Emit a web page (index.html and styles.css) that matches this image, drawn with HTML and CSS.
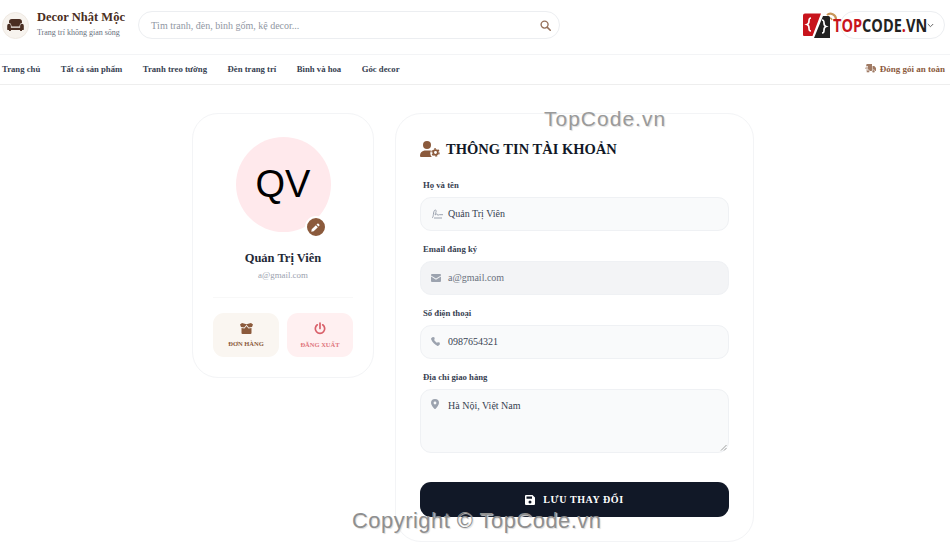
FILE: index.html
```html
<!DOCTYPE html>
<html lang="vi">
<head>
    <meta charset="UTF-8">
    <meta name="viewport" content="width=device-width, initial-scale=1.0">
    <title>Decor Nhật Mộc - Tài khoản</title>
    <link rel="stylesheet" href="styles.css">
</head>
<body>

    <header class="site-header">
        <div class="header-top">
            <div class="brand">
                <div class="brand-icon">
                    <svg width="17" height="12" viewBox="0 0 18 13"><path fill="#4a2e22" d="M5 0h8a3 3 0 0 1 3 3v1.200a3 3 0 0 0-2.600 3V8H4.600v-.8A3 3 0 0 0 2 4.200V3a3 3 0 0 1 3-3zM2 5.200a2 2 0 0 1 2 2V9.500h10V7.200a2 2 0 1 1 4 0V11a1 1 0 0 1-1 1h-1v1h-2v-1H4v1H2v-1H1a1 1 0 0 1-1-1V7.200a2 2 0 0 1 2-2z"/></svg>
                </div>
                <div class="brand-text">
                    <div class="brand-name">Decor Nhật Mộc</div>
                    <div class="brand-sub">Trang trí không gian sống</div>
                </div>
            </div>
            <div class="search-box">
                <span class="search-text">Tìm tranh, đèn, bình gốm, kệ decor...</span>
                <svg width="11" height="11" viewBox="0 0 12 12"><circle cx="5" cy="5" r="3.800" fill="none" stroke="#95705a" stroke-width="1.500"/><path d="M8 8l3.200 3.200" stroke="#95705a" stroke-width="1.700" stroke-linecap="round"/></svg>
            </div>
            <div class="account-pill">
                <svg class="chevron" width="7" height="5" viewBox="0 0 7 5"><path d="M.8 1l2.700 2.700L6.200 1" fill="none" stroke="#666" stroke-width="1"/></svg>
            </div>
        </div>
        <nav class="main-nav">
            <div class="nav-links">
                <a>Trang chủ</a>
                <a>Tất cả sản phẩm</a>
                <a>Tranh treo tường</a>
                <a>Đèn trang trí</a>
                <a>Bình và hoa</a>
                <a>Góc decor</a>
            </div>
            <div class="nav-note">
                <svg width="11" height="9" viewBox="0 0 11 9"><path fill="#a07a63" d="M1.500 0h5.500v7H1.500V5.500H3V5H0v-.6h3v-.8H.5V3H3v-.8H1V1.600h.5zM7.500 2h1.800L11 4v3H7.500z"/><circle cx="3" cy="7.300" r="1.500" fill="#a07a63" stroke="#fff" stroke-width=".6"/><circle cx="8.500" cy="7.300" r="1.500" fill="#a07a63" stroke="#fff" stroke-width=".6"/></svg>
                Đóng gói an toàn
            </div>
        </nav>
    </header>

    <main class="account-page">
        <aside class="profile-card">
            <div class="avatar">
                QV
                <span class="avatar-edit">
                    <svg width="9" height="9" viewBox="0 0 10 10"><path fill="#fff" d="M7 .8a1 1 0 0 1 1.400 0l.8.8a1 1 0 0 1 0 1.400L8.300 3.900 6.100 1.700zM5.400 2.400l2.200 2.200L3 9.200l-2.700.5.500-2.700z"/></svg>
                </span>
            </div>
            <div class="profile-name">Quản Trị Viên</div>
            <div class="profile-email">a@gmail.com</div>
            <div class="profile-actions">
                <a class="action-btn action-orders">
                    <svg width="13" height="11" viewBox="0 0 13 11"><path fill="#8b5a3c" d="M1.500 5l3 .6L6.500 3l2 2.600 3-.6V10a1 1 0 0 1-1 1h-8a1 1 0 0 1-1-1zM0 1.600L2 0l4.500 1.200L11 0l2 1.600-1 2.400-3.200.6-2.300-2.800-2.300 2.800L1 4z"/></svg>
                    <span>ĐƠN HÀNG</span>
                </a>
                <a class="action-btn action-logout">
                    <svg width="12" height="13" viewBox="0 0 12 13"><path d="M6 1v5.500" stroke="#d9606a" stroke-width="1.700" stroke-linecap="round"/><path d="M3.300 2.800a4.700 4.700 0 1 0 5.400 0" fill="none" stroke="#d9606a" stroke-width="1.700" stroke-linecap="round"/></svg>
                    <span>ĐĂNG XUẤT</span>
                </a>
            </div>
        </aside>

        <section class="info-card">
            <h2 class="info-title">
                <svg width="20" height="16" viewBox="0 0 20 16"><circle cx="7" cy="4" r="4" fill="#8b5a3c"/><path fill="#8b5a3c" d="M4.500 9.500h5c.6 0 1.100.1 1.600.3a5 5 0 0 0 .6 5.900c-.2.200-.4.300-.7.300H1a1 1 0 0 1-1-1 5.500 5.500 0 0 1 4.500-5.500z"/><circle cx="15.500" cy="11.500" r="2.300" fill="none" stroke="#8b5a3c" stroke-width="1.700"/><circle cx="15.500" cy="11.500" r="3.600" fill="none" stroke="#8b5a3c" stroke-width="1.300" stroke-dasharray="1.900 1.870"/></svg>
                THÔNG TIN TÀI KHOẢN
            </h2>

            <div class="field">
                <label>Họ và tên</label>
                <div class="input-box">
                    <svg class="field-icon" width="12" height="10" viewBox="0 0 12 10"><path d="M1 9c1-.5 1.200-2 1.400-3.500C2.600 3.500 3 1 4.300 1c1 0 1 1.300.6 2.300C4.500 4.500 4 5 4.200 6c.6-.5 1.300-1.500 2-1 .4.300 0 1 .5 1.200.5.100 1-.5 1.600-.5H12M3 9h8" fill="none" stroke="#9ca3af" stroke-width="1"/></svg>
                    <span>Quản Trị Viên</span>
                </div>
            </div>
            <div class="field">
                <label>Email đăng ký</label>
                <div class="input-box is-locked">
                    <svg class="field-icon" width="10" height="8" viewBox="0 0 10 8"><path fill="#9ca3af" d="M1 0h8a1 1 0 0 1 1 1v.4L5 4.600 0 1.400V1a1 1 0 0 1 1-1zM0 2.600l5 3.200 5-3.200V7a1 1 0 0 1-1 1H1a1 1 0 0 1-1-1z"/></svg>
                    <span>a@gmail.com</span>
                </div>
            </div>
            <div class="field">
                <label>Số điện thoại</label>
                <div class="input-box">
                    <svg class="field-icon" width="10" height="10" viewBox="0 0 10 10"><path fill="#9ca3af" d="M2.300.1l1 .3c.3.1.5.4.4.7L3.300 3c0 .2 0 .4.2.5l1.900 2c.2.200.4.200.6.100l1.800-.4c.3-.1.600.1.700.4l.4 1.200c.1.300 0 .6-.2.800l-1 1c-.3.300-.7.400-1.100.300C3.800 7.800 1.400 5.200.1 2.200 0 1.800.100 1.400.4 1.100L1.500.3c.2-.2.500-.3.800-.2z"/></svg>
                    <span>0987654321</span>
                </div>
            </div>
            <div class="field">
                <label>Địa chỉ giao hàng</label>
                <div class="input-box is-textarea">
                    <svg class="field-icon" width="8" height="10" viewBox="0 0 8 10"><path fill="#9ca3af" fill-rule="evenodd" d="M4 0a4 4 0 0 1 4 4c0 1.800-2.400 4.700-3.400 5.800a.8.800 0 0 1-1.200 0C2.400 8.700 0 5.800 0 4a4 4 0 0 1 4-4zm0 2.600a1.400 1.400 0 1 0 0 2.800 1.400 1.400 0 0 0 0-2.800z"/></svg>
                    <span>Hà Nội, Việt Nam</span>
                    <svg class="resize-grip" width="7" height="7" viewBox="0 0 7 7"><path d="M1 6.500L6.500 1M4 6.500L6.500 4" stroke="#888" stroke-width=".8"/></svg>
                </div>
            </div>

            <button class="save-btn">
                <svg width="10" height="10" viewBox="0 0 10 10"><path fill="#fff" fill-rule="evenodd" d="M1 0h6.500L10 2.500V9a1 1 0 0 1-1 1H1a1 1 0 0 1-1-1V1a1 1 0 0 1 1-1zm.5 1.500v2.200h5.500V1.500zM5 5.500a1.500 1.500 0 1 0 0 3 1.500 1.500 0 0 0 0-3z"/></svg>
                LƯU THAY ĐỔI
            </button>
        </section>
    </main>

    <!-- logo va watermark nam de len trang -->
    <div class="tc-logo">
        <svg class="tc-mark" width="36" height="30" viewBox="0 0 36 30">
            <path fill="none" stroke="#c9975a" stroke-width="2.200" d="M24 4a5.500 5.500 0 0 1 9 4"/>
            <path fill="none" stroke="#c9975a" stroke-width="1.500" d="M26 7a2.500 2.500 0 0 1 3 2"/>
            <path fill="#c8141c" d="M2 2.500h16L9.500 25H1a1 1 0 0 1-1-1V4.500a2 2 0 0 1 2-2z"/>
            <path fill="#222" d="M20 5h5.500a1.500 1.500 0 0 1 1.500 1.500V27H11z"/>
            <path fill="none" stroke="#fff" stroke-width="1.700" d="M8 7C6 7 6 8 6 10s-.5 3-2 3.500c1.500.5 2 1.500 2 3.500s0 3 2 3M19 9c2 0 2 1 2 3s.5 3 2 3.500c-1.500.5-2 1.500-2 3.500s0 3-2 3"/>
        </svg>
        <span class="tc-text"><span class="tc-red">TOP</span>CODE<span class="tc-red">.</span>VN</span>
    </div>
    <div class="wm wm-top">TopCode.vn</div>
    <div class="wm wm-bottom">Copyright © TopCode.vn</div>

</body>
</html>
```
FILE: styles.css
```css
* {
    box-sizing: border-box;
}

html, body {
    height: 548px;
    overflow: hidden;
}

body {
    margin: 0;
    background-color: #fff;
    font-family: 'Liberation Serif', serif;
    color: #111827;
    position: relative;
}

/* --- header --- */
.site-header {
    background-color: #fff;
    border-bottom: 1px solid #eeeeee;
}

.header-top {
    display: flex;
    align-items: center;
    height: 55px;
    padding: 0 5px 4px 2px;
    border-bottom: 1px solid #f3f4f6;
}

.brand {
    display: flex;
    align-items: center;
    gap: 8px;
    width: 136px;
}

.brand-icon {
    width: 27px;
    height: 27px;
    border-radius: 50%;
    background-color: #f7f3ee;
    border: 1px solid #efe9e2;
    display: flex;
    align-items: center;
    justify-content: center;
}

.brand-text {
    padding-bottom: 2px;
}

.brand-name {
    font-size: 12.500px;
    font-weight: 700;
    color: #4a2e22;
    line-height: 15px;
}

.brand-sub {
    font-size: 8px;
    color: #6b7280;
    line-height: 11px;
    margin-top: 2px;
}

.search-box {
    width: 422px;
    height: 28px;
    border: 1px solid #eceef1;
    border-radius: 14px;
    display: flex;
    align-items: center;
    justify-content: space-between;
    padding: 0 8px 0 12px;
}

.search-text {
    font-size: 10px;
    color: #9097a3;
}

.account-pill {
    margin-left: auto;
    width: 105px;
    height: 28px;
    border: 1px solid #eceef1;
    border-radius: 14px;
    display: flex;
    align-items: center;
    justify-content: flex-end;
    padding-right: 10px;
}

.main-nav {
    display: flex;
    align-items: center;
    justify-content: space-between;
    height: 29px;
    padding: 0 5px 2px 2px;
}

.nav-links {
    display: flex;
    gap: 20.500px;
}

.nav-links a {
    font-size: 8.700px;
    font-weight: 700;
    color: #374151;
}

.nav-note {
    display: flex;
    align-items: center;
    gap: 4px;
    font-size: 9px;
    font-weight: 700;
    color: #8b5a3c;
}

/* --- noi dung tai khoan --- */
.account-page {
    display: flex;
    align-items: flex-start;
    gap: 21px;
    padding: 28px 0 0 192px;
}

.profile-card {
    width: 182px;
    height: 265px;
    border: 1px solid #f3f4f6;
    border-radius: 26px;
    padding: 23px 20px 0;
    display: flex;
    flex-direction: column;
    align-items: center;
}

.avatar {
    width: 95px;
    height: 95px;
    border-radius: 50%;
    background-color: #ffe9ec;
    color: #000;
    font-family: 'Liberation Sans', sans-serif;
    font-size: 38px;
    display: flex;
    align-items: center;
    justify-content: center;
    position: relative;
    flex-shrink: 0;
}

.avatar-edit {
    position: absolute;
    right: 4px;
    bottom: -6px;
    width: 22px;
    height: 22px;
    border-radius: 50%;
    background-color: #8b5a3c;
    border: 2px solid #fff;
    display: flex;
    align-items: center;
    justify-content: center;
}

.profile-name {
    font-size: 12.500px;
    font-weight: 700;
    color: #1f2937;
    margin-top: 19px;
    line-height: 15px;
}

.profile-email {
    font-size: 8.900px;
    color: #9ca3af;
    margin-top: 3px;
    line-height: 12px;
}

.profile-actions {
    width: 100%;
    margin-top: 16px;
    padding-top: 15px;
    border-top: 1px solid #f8f8f8;
    display: flex;
    gap: 8px;
    justify-content: center;
}

.action-btn {
    width: 66px;
    height: 44px;
    border-radius: 11px;
    display: flex;
    flex-direction: column;
    align-items: center;
    justify-content: center;
    gap: 6px;
    font-size: 6.500px;
    font-weight: 700;
}

.action-orders {
    background-color: #faf6f1;
    color: #8b5a3c;
}

.action-logout {
    background-color: #fff0f1;
    color: #e0747c;
}

.info-card {
    width: 359px;
    height: 429px;
    border: 1px solid #f3f4f6;
    border-radius: 26px;
    padding: 25px 24px 0;
}

.info-title {
    display: flex;
    align-items: center;
    gap: 6px;
    margin: 0 0 21px;
    font-size: 14.500px;
    line-height: 20px;
    font-weight: 700;
    color: #111827;
}

.field {
    margin-bottom: 13px;
}

.field label {
    display: block;
    font-size: 8.700px;
    font-weight: 700;
    color: #374151;
    line-height: 11px;
    margin: 0 0 6px 3px;
}

.input-box {
    position: relative;
    height: 34px;
    border: 1px solid #eff1f4;
    border-radius: 11px;
    background-color: #f9fafb;
    display: flex;
    align-items: center;
    padding: 0 0 2px 27px;
    font-size: 10px;
    color: #374151;
}

.input-box.is-locked {
    background-color: #f3f4f6;
    color: #6b7280;
}

.input-box.is-textarea {
    height: 64px;
    align-items: flex-start;
    padding-top: 10px;
}

.field-icon {
    position: absolute;
    left: 10px;
    top: 50%;
    transform: translateY(-50%);
}

.is-textarea .field-icon {
    top: 9px;
    left: 10px;
    transform: none;
}

.resize-grip {
    position: absolute;
    right: 1px;
    bottom: 1px;
}

.save-btn {
    width: 100%;
    height: 35px;
    margin-top: 29px;
    border: none;
    border-radius: 11px;
    background-color: #111827;
    color: #fff;
    font-family: 'Liberation Serif', serif;
    font-size: 10px;
    font-weight: 700;
    letter-spacing: 0.6px;
    display: flex;
    align-items: center;
    justify-content: center;
    gap: 8px;
}

/* --- logo + watermark --- */
.tc-logo {
    position: absolute;
    left: 803px;
    top: 10px;
    display: flex;
    align-items: center;
}

.tc-mark {
    display: block;
    margin-right: -6px;
}

.tc-text {
    font-family: 'Open Sans', sans-serif;
    font-weight: 700;
    font-size: 17.500px;
    line-height: 30px;
    padding-bottom: 2px;
    color: #222;
    transform: scaleX(0.83);
    transform-origin: left center;
    display: block;
}

.tc-red {
    color: #c8141c;
}

.wm {
    position: absolute;
    font-family: 'Liberation Sans', sans-serif;
    color: #9a9a9a;
    text-shadow: 1px 1px 1px #dcdcdc;
    white-space: nowrap;
}

.wm-top {
    left: 544px;
    top: 107px;
    font-size: 21px;
    letter-spacing: 1px;
}

.wm-bottom {
    left: 352px;
    top: 508px;
    font-size: 22px;
    letter-spacing: 0.450px;
    color: #8f8f8f;
}
```
